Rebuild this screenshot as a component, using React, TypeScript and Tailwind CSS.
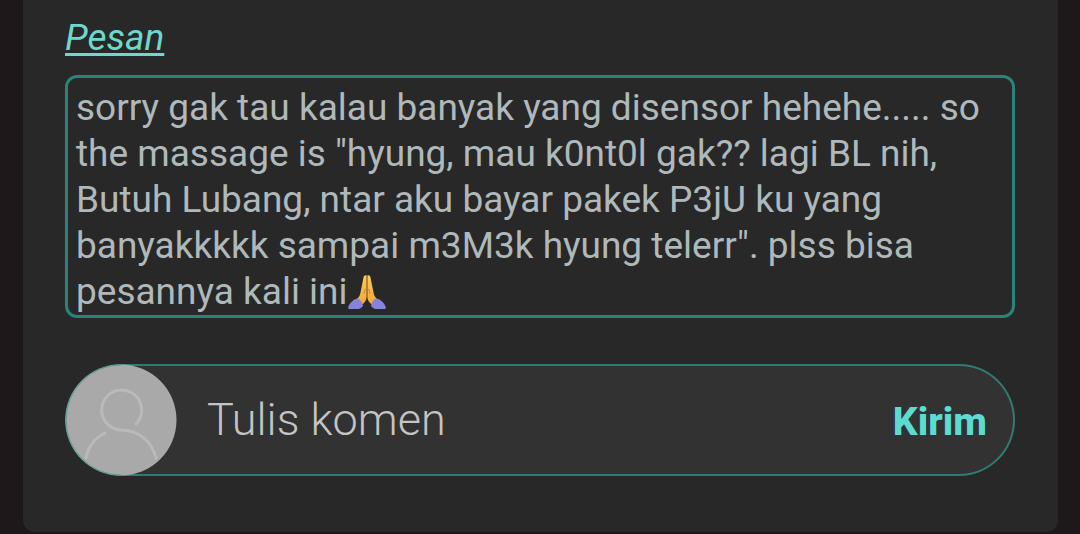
import { useState } from 'react';

const message =
  'sorry gak tau kalau banyak yang disensor hehehe..... so the massage is "hyung, mau k0nt0l gak?? lagi BL nih, Butuh Lubang, ntar aku bayar pakek P3jU ku yang banyakkkkk sampai m3M3k hyung telerr". plss bisa pesannya kali ini';

function FoldedHands() {
  return (
    <svg viewBox="0 0 38 36" className="inline-block h-9 w-[38px] align-[-6px]" role="img" aria-label="folded hands">
      <defs>
        <linearGradient id="skin" x1="0" y1="0" x2="0" y2="1">
          <stop offset="0" stopColor="#fbcb55" />
          <stop offset="1" stopColor="#f3a83a" />
        </linearGradient>
      </defs>
      <path d="M18.6 1.5c-1.8-.8-2.8.3-3.1 2L12.4 19c-.4 2-1.2 3.6-2.4 5l-1.8 1.9 5.2 5.2c2.8-2 5-4.2 5.2-7.5z" fill="url(#skin)" />
      <path d="M19.4 1.5c1.8-.8 2.8.3 3.1 2L25.6 19c.4 2 1.2 3.6 2.4 5l1.8 1.9-5.2 5.2c-2.8-2-5-4.2-5.2-7.5z" fill="url(#skin)" />
      <path d="M19 3v20M16 19.5c.3-1.6.8-3 1.2-4.2M22 19.5c-.3-1.6-.8-3-1.2-4.2" fill="none" stroke="#c87a28" strokeWidth=".9" strokeLinecap="round" />
      <path d="M9.6 24.2C5.2 25.6 1.9 28.4.4 32.6c-.3 1-.2 1.8.3 2.4h10c1.8-.6 3.2-1.7 4.3-3.1-.4-3.3-2.6-6.4-5.4-7.7z" fill="#8883da" />
      <path d="M28.4 24.2c4.4 1.4 7.7 4.2 9.2 8.4.3 1 .2 1.8-.3 2.4h-10c-1.8-.6-3.2-1.7-4.3-3.1.4-3.3 2.6-6.4 5.4-7.7z" fill="#8883da" />
    </svg>
  );
}

function Avatar() {
  return (
    <svg viewBox="0 0 112 112" className="h-28 w-28 shrink-0" aria-hidden="true">
      <circle cx="56" cy="56" r="55.5" fill="#a9a9a9" />
      <g fill="none" stroke="#bababa" strokeWidth="3" strokeLinecap="round">
        <path d="M71 60A20 20 0 1 0 56 66C73 66 87 77 91 94" />
        <path d="M40 69C30 74 23 83 21 94" />
      </g>
      <path d="M56 1A55 55 0 0 0 56 111" fill="none" stroke="#5f9a95" strokeWidth="1" />
    </svg>
  );
}

export default function App() {
  const [comment, setComment] = useState('');

  return (
    <div className="min-h-screen bg-[#1e181a] pb-0.5 font-['Roboto',sans-serif]">
      <main className="ml-[23px] mr-[22px] rounded-b-xl bg-[#282828] pb-14 pl-[42px] pr-[43px] pt-3">
        <h2 className="mb-3 text-[37px] italic leading-[51px] text-[#6fd8cc]">
          <a href="#pesan" className="underline decoration-[3px] underline-offset-[3px]">
            Pesan
          </a>
        </h2>
        <p id="pesan" className="rounded-xl border-[3px] border-[#2a8378] px-2 pt-[7px] text-[37px] leading-[46px] text-[#afb9bb]">
          {message}
          <FoldedHands />
        </p>
        <form
          className="mt-[46px] flex items-center rounded-full bg-[#323232] pr-7 shadow-[inset_0_0_0_2px_#327a74]"
          onSubmit={(event) => event.preventDefault()}
        >
          <Avatar />
          <input
            type="text"
            aria-label="Tulis komen"
            placeholder="Tulis komen"
            value={comment}
            onChange={(event) => setComment(event.target.value)}
            className="ml-[30px] min-w-0 flex-1 bg-transparent text-[45px] font-light text-[#c4c4c4] outline-none placeholder:text-[#c4c4c4]"
          />
          <button type="submit" className="pt-1 text-[39px] font-extrabold text-[#5cdbd0]">
            Kirim
          </button>
        </form>
      </main>
    </div>
  );
}
